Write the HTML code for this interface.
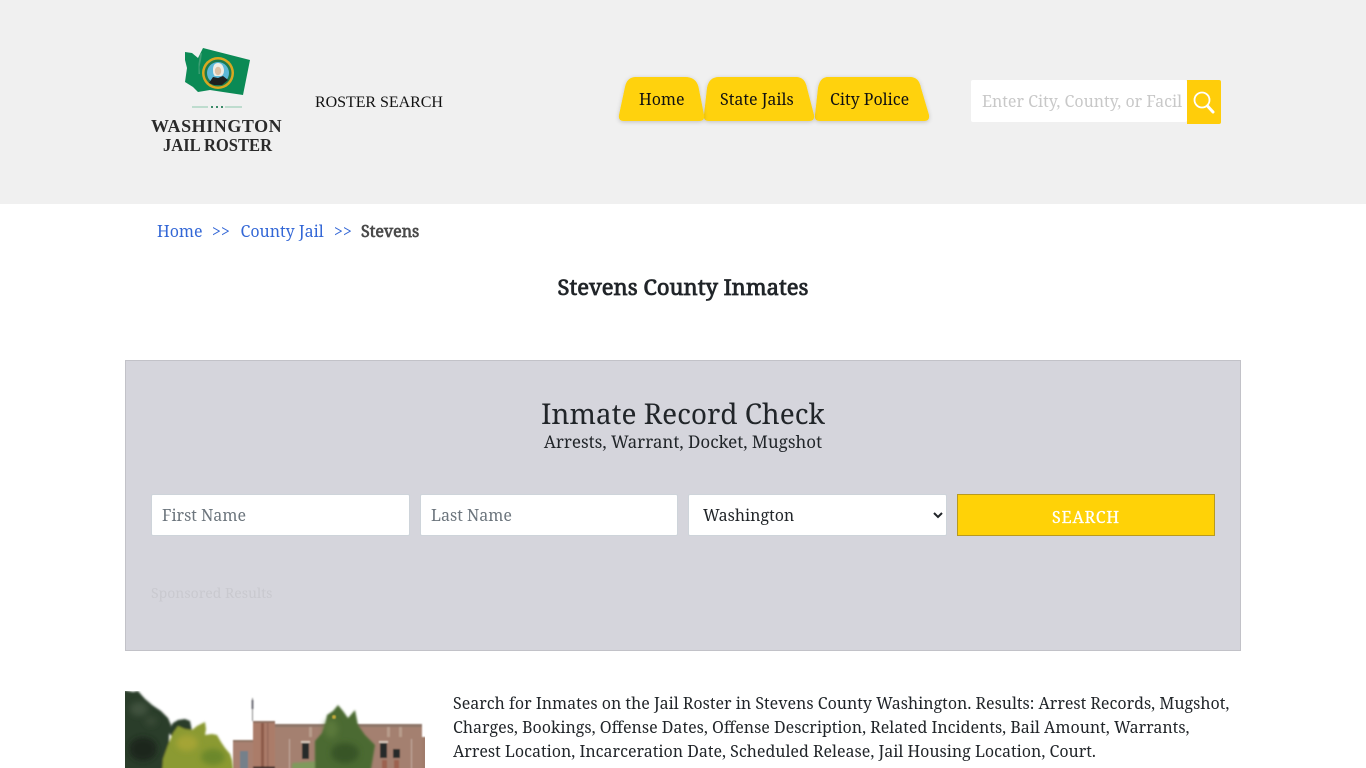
<!DOCTYPE html>
<html lang="en"><head><meta charset="utf-8"><title>Stevens County Inmates</title>
<style>
html,body{margin:0;padding:0;background:#fff;width:1366px;height:768px;overflow:hidden}
body{position:relative;font-family:"Noto Serif","DejaVu Serif",serif;font-stretch:condensed;color:#212529;font-size:15px}
.t{position:absolute;white-space:nowrap;line-height:24px}
.hdr{position:absolute;left:0;top:0;width:1366px;height:204px;background:#f0f0f0}
.box{position:absolute;left:125px;top:360px;width:1114px;height:289px;background:#d5d5dc;border:1px solid #c2c2c8}
.inp{position:absolute;top:494px;height:40px;background:#fff;border:1px solid #ced4da;border-radius:2px}
a{color:#3367d6;text-decoration:none}
select{position:absolute;left:688px;top:494px;width:259px;height:42px;background:#fff;border:1px solid #ced4da;border-radius:2px;padding:0 10px;font-family:inherit;font-stretch:condensed;font-size:16px;color:#212529}
</style></head><body>
<div class="hdr"></div>
<svg style="position:absolute;left:170px;top:40px" width="90" height="75" viewBox="0 0 90 75">
<path d="M15 12L22 13L28 18L33 8L80 20L73 55L53 52L40 50L28 52L23 47L15 42L17 28L15 20Z" fill="#0b8a55"/>
<path d="M30 14L32 13L31 20L29.500 27L30 34L28.500 34L28.500 24Z" fill="#3f9f74"/>
<circle cx="48" cy="33" r="16" fill="#d8a820"/><circle cx="48" cy="33" r="13.500" fill="#1c7a50"/><circle cx="48" cy="33" r="11" fill="#5cb8d8"/>
<path d="M39 43L43 37L48 38L53 36L58 40L52 45L44 45Z" fill="#1d2020"/><path d="M43 30Q43 23 48 23Q53 23 54 30Q54 35 51 36H45Q43 35 43 30Z" fill="#f0ece4"/><ellipse cx="48" cy="31" rx="3.200" ry="4.200" fill="#dcc0a4"/>
<path d="M22 67H38M55 67H72" stroke="#8cc8ac" stroke-width="1"/><path d="M41 67h2M46 67h2M51 67h2" stroke="#3a8a68" stroke-width="2"/>
</svg>
<div class="t" style="left:151px;top:114px;font:bold 18px/24px 'Liberation Serif',serif;color:#2a2a2a;letter-spacing:.55px">WASHINGTON</div>
<div class="t" style="left:163px;top:133px;font:bold 18px/24px 'Liberation Serif',serif;color:#2a2a2a;transform:scaleX(.92);transform-origin:left center">JAIL ROSTER</div>
<div class="t" style="left:315px;top:90.500px;font-family:'Liberation Serif',serif;font-size:16px;color:#111;letter-spacing:-.05px">ROSTER SEARCH</div>

<svg style="position:absolute;left:610px;top:70px;overflow:visible" width="330" height="60">
<defs><filter id="s" x="-10%" y="-10%" width="120%" height="130%"><feDropShadow dx="0" dy="1" stdDeviation="2" flood-color="#000" flood-opacity=".2"/></filter></defs>
<g fill="#ffd207">
<path filter="url(#s)" d="M218 7H300Q309 7 311 18L319 45Q320 51 314 51H210Q204 51 205 45L208 18Q210 7 218 7Z"/>
<path filter="url(#s)" d="M109 7H186Q195 7 197 18L204 45Q205 51 199 51H99Q93 51 94 45L97 18Q99 7 109 7Z"/>
<path filter="url(#s)" d="M26 7H75Q86 7 88.500 17L94 45Q95 51 89 51H14Q8 51 9 45L15 17Q17 7 26 7Z"/>
</g></svg>
<div class="t" style="left:639px;top:87px;font-size:16px;color:#111">Home</div>
<div class="t" style="left:720px;top:87px;font-size:16px;color:#111">State Jails</div>
<div class="t" style="left:830px;top:87px;font-size:16px;color:#111">City Police</div>

<div style="position:absolute;left:971px;top:80px;width:216px;height:42px;background:#fff;border-radius:2px"></div>
<div class="t" style="left:982px;top:89px;font-size:16px;color:#c8c8c8;width:200px;overflow:hidden">Enter City, County, or Facility</div>
<div style="position:absolute;left:1187px;top:80px;width:34px;height:44px;background:#ffcd0a;border-radius:0 2px 2px 0"></div>
<svg style="position:absolute;left:1187px;top:80px" width="34" height="44" fill="none" stroke="#fff"><circle cx="15" cy="20" r="7.500" stroke-width="1.800"/><path d="M20.500 26L26 32" stroke-width="3" stroke-linecap="round"/></svg>

<div class="t" style="left:157px;top:219px;font-size:16px"><a href="#">Home</a></div>
<div class="t" style="left:212px;top:219px;font-size:16px;color:#3367d6">&gt;&gt;</div>
<div class="t" style="left:240.500px;top:219px;font-size:16px"><a href="#">County Jail</a></div>
<div class="t" style="left:334px;top:219px;font-size:16px;color:#3367d6">&gt;&gt;</div>
<div class="t" style="left:361px;top:219px;font-size:16px;color:#4a4a4a;-webkit-text-stroke:.7px #4a4a4a">Stevens</div>
<div class="t" style="left:0;width:1366px;text-align:center;top:275px;font-size:22px;-webkit-text-stroke:.8px #212529">Stevens County Inmates</div>

<div class="box"></div>
<div class="t" style="left:0;width:1366px;text-align:center;top:399px;font-size:28px;line-height:30px">Inmate Record Check</div>
<div class="t" style="left:0;width:1366px;text-align:center;top:430px;font-size:17px">Arrests, Warrant, Docket, Mugshot</div>
<div class="inp" style="left:151px;width:257px"></div>
<div class="t" style="left:162px;top:503px;font-size:16px;color:#6c757d">First Name</div>
<div class="inp" style="left:420px;width:256px"></div>
<div class="t" style="left:431px;top:503px;font-size:16px;color:#6c757d">Last Name</div>
<select><option>Washington</option></select>
<div style="position:absolute;left:957px;top:494px;width:256px;height:40px;background:#ffd207;border:1px solid #b89a20"></div>
<div class="t" style="left:957px;width:258px;text-align:center;top:505px;font-size:16px;color:#fff;letter-spacing:.9px;-webkit-text-stroke:.25px #fff">SEARCH</div>
<div class="t" style="left:151px;top:582px;font-size:14px;color:#c9c9cf">Sponsored Results</div>

<svg style="position:absolute;left:125px;top:691px" width="300" height="77" viewBox="0 0 300 77">
<defs>
<filter id="b" x="-5%" y="-5%" width="110%" height="110%"><feGaussianBlur stdDeviation=".7"/></filter>
<filter id="soft" x="-50%" y="-50%" width="200%" height="200%"><feGaussianBlur stdDeviation="3"/></filter>
<filter id="r" x="-15%" y="-15%" width="130%" height="130%"><feGaussianBlur stdDeviation="1"/></filter>
</defs>
<rect width="300" height="77" fill="#fff"/>
<g filter="url(#b)">
<rect x="127" y="7" width="1" height="23" fill="#8a8a8a"/><rect x="126.500" y="9" width="2" height="9" fill="#707078"/>
<rect x="108" y="49" width="20" height="30" fill="#a9806f"/>
<rect x="108" y="49" width="20" height="2" fill="#8f7364"/>
<rect x="128" y="33" width="169" height="46" fill="#a48070"/>
<rect x="128" y="33" width="169" height="3" fill="#8c7567"/>
<rect x="297" y="46" width="5" height="33" fill="#a07c6c"/>
<rect x="128" y="30" width="22" height="49" fill="#ab7b69"/>
<rect x="128" y="30" width="22" height="2" fill="#8f6f60"/>
<rect x="136" y="32" width="3" height="45" fill="#8c5a4a"/><rect x="142" y="32" width="1.500" height="45" fill="#96685a"/>
<rect x="115" y="60" width="8" height="19" fill="#75808a"/>
<rect x="128" y="75.500" width="22" height="2" fill="#2b2420"/>
<rect x="176" y="50" width="9" height="2" fill="#d8c8bc"/><rect x="177" y="52" width="7" height="16" fill="#272a2c"/>
<rect x="254" y="50" width="9" height="2" fill="#d8c8bc"/><rect x="255" y="52" width="7" height="15" fill="#272a2c"/>
<rect x="268" y="58" width="7" height="9" fill="#272a2c"/>
<rect x="257" y="69" width="5" height="9" fill="#9c6250"/><rect x="269" y="69" width="5" height="9" fill="#9c6250"/>
<rect x="184" y="36" width="3" height="10" fill="#b89c8c"/><rect x="262" y="36" width="3" height="10" fill="#b89c8c"/><rect x="274" y="36" width="3" height="10" fill="#b89c8c"/>
<rect x="164" y="48" width="1" height="31" fill="#c2aca0"/><rect x="286" y="48" width="1" height="31" fill="#c2aca0"/>
</g>
<g filter="url(#r)">
<path d="M-6 -2L8 1L13 0L20 8L27 14L36 20L43 27L46 34L44 45L44 84L-6 84Z" fill="#2b3d29"/>
<path d="M43 40L48 32L53 29L60 28L65 30L67 40L50 50Z" fill="#2c3d2c"/>
<path d="M43 54L48 42L53 35L60 38L67 39L72 35L80 31L81 38L80 44L87 43L92 44L96 51L100 57L105 63L107 69L109 84L37 84L38 68Z" fill="#8b9a30"/>
<path d="M167 72L193 70V84H167Z" fill="#7f9a5c"/>
<path d="M190 50L197 42L200 35L202 24L208 20L213 14L218 20L223 27L230 19L233 34L240 44L250 54L248 66L245 84H190Z" fill="#4c6b32"/>
</g>
<g filter="url(#soft)">
<ellipse cx="14" cy="18" rx="9" ry="7" fill="#3f513c"/><ellipse cx="26" cy="30" rx="6" ry="5" fill="#384a34"/><ellipse cx="18" cy="58" rx="14" ry="12" fill="#1b281c"/>
<ellipse cx="62" cy="52" rx="11" ry="8" fill="#a4a436"/><ellipse cx="88" cy="66" rx="12" ry="8" fill="#6c882c"/>
<ellipse cx="206" cy="38" rx="7" ry="9" fill="#5a783a"/><ellipse cx="220" cy="62" rx="14" ry="10" fill="#385428"/>
</g>
<circle cx="209" cy="26" r="2" fill="#c4a83a" filter="url(#b)"/>
</svg>

<div class="t" style="left:453px;top:691px;font-size:16px">Search for Inmates on the Jail Roster in Stevens County Washington. Results: Arrest Records, Mugshot,</div>
<div class="t" style="left:453px;top:715px;font-size:16px">Charges, Bookings, Offense Dates, Offense Description, Related Incidents, Bail Amount, Warrants,</div>
<div class="t" style="left:453px;top:739px;font-size:16px">Arrest Location, Incarceration Date, Scheduled Release, Jail Housing Location, Court.</div>
</body></html>
